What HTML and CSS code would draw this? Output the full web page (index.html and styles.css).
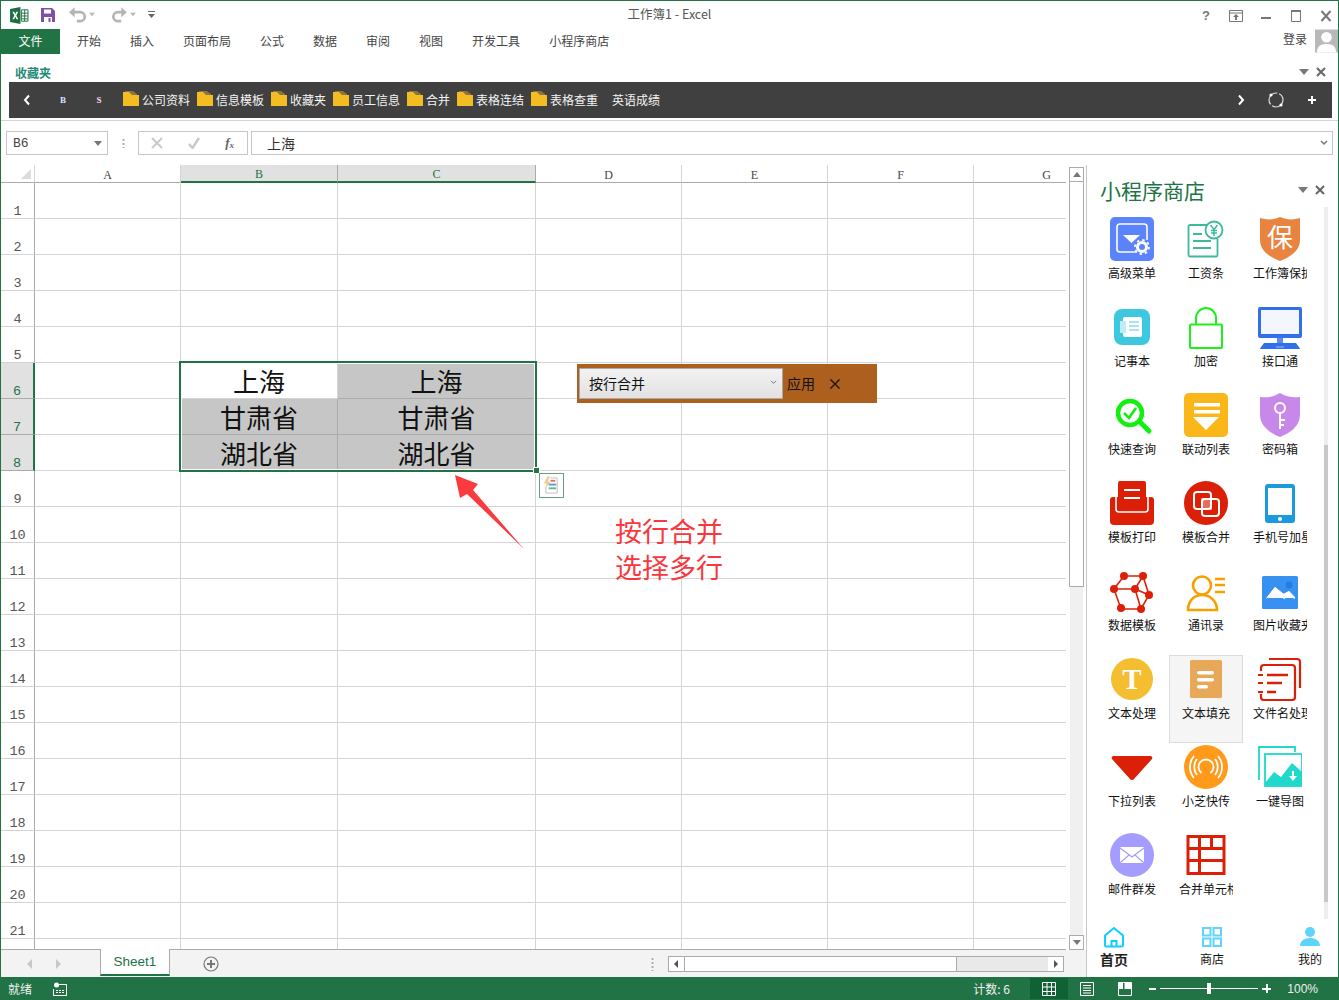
FILE: index.html
```html
<!DOCTYPE html>
<html lang="zh">
<head>
<meta charset="utf-8">
<title>工作簿1 - Excel</title>
<link rel="stylesheet" href="styles.css">
</head>
<body>
<div class="app">
  <header class="titlebar">
    <div class="qat">
      <svg class="q-xl" viewBox="0 0 20 18"><path fill="#1d6f42" d="M0 2l11-2v18L0 16z"/><path fill="#fff" d="M12 3h7v12h-7z" stroke="#1d6f42"/><path stroke="#1d6f42" d="M12 6.500h7M12 9.500h7M12 12.500h7M15.500 3v12" fill="none"/><path d="M2.500 5l2 4-2 4h1.800l1.300-2.600L6.900 13h1.800l-2.100-4 2-4H6.800L5.600 7.500 4.400 5z" fill="#fff"/></svg>
      <svg class="q-save" viewBox="0 0 14 14"><path fill="#7f4fa8" d="M0 0h11l3 3v11H0z"/><path fill="#fff" d="M3 1.500h7v4H3zM3 9h8v5H3z"/><path fill="#7f4fa8" d="M7.500 10h2v4h-2z"/></svg>
      <svg class="q-undo" viewBox="0 0 24 14"><path fill="none" stroke="#b5b5b5" stroke-width="2.400" d="M4 4.500h6a4 4 0 0 1 0 8H7"/><path fill="#b5b5b5" d="M0 4.500L5 0v9z"/><path fill="#b5b5b5" d="M18 5h5l-2.500 3z"/></svg>
      <svg class="q-undo" viewBox="0 0 24 14"><path fill="none" stroke="#b5b5b5" stroke-width="2.400" d="M11 4.500H7a4 4 0 0 0 0 8h3"/><path fill="#b5b5b5" d="M15 4.500L10 0v9z"/><path fill="#b5b5b5" d="M18 5h5l-2.500 3z"/></svg>
      <svg class="q-more" viewBox="0 0 7 8"><path fill="#666" d="M0 0h7v1H0zM0 3h7L3.500 7z"/></svg>
    </div>
    <div class="doc-title">工作簿1 - Excel</div>
    <div class="winbtns">
      <span class="help">?</span>
      <svg class="w-ic" viewBox="0 0 14 12"><path fill="none" stroke="#777" d="M.5 .5h13v11H.5zM.5 3h13"/><path fill="#777" d="M7 4l3 3H8v3H6V7H4z"/></svg>
      <svg class="w-ic" viewBox="0 0 14 12"><path fill="#777" d="M2 7h10v2H2z"/></svg>
      <svg class="w-ic" viewBox="0 0 14 12"><path fill="none" stroke="#777" d="M2.500 .5h9v11h-9z"/><path fill="#777" d="M2 0h10v2H2z"/></svg>
      <svg class="w-ic" viewBox="0 0 14 12"><path stroke="#777" stroke-width="2" d="M2.500 1l9 10M11.500 1l-9 10"/></svg>
    </div>
  </header>

  <nav class="ribbon-tabs">
    <div class="file-tab">文件</div>
    <ul class="tab-list">
      <li>开始</li><li>插入</li><li>页面布局</li><li>公式</li><li>数据</li><li>审阅</li><li>视图</li><li>开发工具</li><li>小程序商店</li>
    </ul>
    <div class="login">登录</div>
    <svg class="avatar" viewBox="0 0 24 24"><path fill="#b9b9b9" d="M0 0h24v24H0z"/><circle cx="12" cy="8" r="5.500" fill="#fff"/><path fill="#fff" d="M2 24c0-7 4-9 10-9s10 2 10 9z"/></svg>
  </nav>

  <section class="favorites">
    <div class="fav-head">
      <span class="fav-title">收藏夹</span>
      <span class="tri"></span>
      <svg class="close-x" viewBox="0 0 10 10"><path stroke="#666" stroke-width="2" d="M1 1l8 8M9 1l-8 8"/></svg>
    </div>
    <div class="fav-bar">
      <svg class="fb-chev" viewBox="0 0 8 12"><path fill="none" stroke="#fff" stroke-width="2" d="M6 1.500L2 6l4 4.500"/></svg>
      <span class="fb-b">B</span>
      <span class="fb-s">S</span>
      <div class="folders">
        <a class="fold"><svg class="folder" viewBox="0 0 16 16"><path fill="#8a7440" d="M2 0h8l4 3v4H2z"/><path fill="#f3bc23" d="M0 1h6l3 3h7v11H0z"/></svg>公司资料</a>
        <a class="fold"><svg class="folder" viewBox="0 0 16 16"><path fill="#8a7440" d="M2 0h8l4 3v4H2z"/><path fill="#f3bc23" d="M0 1h6l3 3h7v11H0z"/></svg>信息模板</a>
        <a class="fold"><svg class="folder" viewBox="0 0 16 16"><path fill="#8a7440" d="M2 0h8l4 3v4H2z"/><path fill="#f3bc23" d="M0 1h6l3 3h7v11H0z"/></svg>收藏夹</a>
        <a class="fold"><svg class="folder" viewBox="0 0 16 16"><path fill="#8a7440" d="M2 0h8l4 3v4H2z"/><path fill="#f3bc23" d="M0 1h6l3 3h7v11H0z"/></svg>员工信息</a>
        <a class="fold"><svg class="folder" viewBox="0 0 16 16"><path fill="#8a7440" d="M2 0h8l4 3v4H2z"/><path fill="#f3bc23" d="M0 1h6l3 3h7v11H0z"/></svg>合并</a>
        <a class="fold"><svg class="folder" viewBox="0 0 16 16"><path fill="#8a7440" d="M2 0h8l4 3v4H2z"/><path fill="#f3bc23" d="M0 1h6l3 3h7v11H0z"/></svg>表格连结</a>
        <a class="fold"><svg class="folder" viewBox="0 0 16 16"><path fill="#8a7440" d="M2 0h8l4 3v4H2z"/><path fill="#f3bc23" d="M0 1h6l3 3h7v11H0z"/></svg>表格查重</a>
        <a class="fold plain">英语成绩</a>
      </div>
      <svg class="fb-next" viewBox="0 0 8 12"><path fill="none" stroke="#fff" stroke-width="2" d="M2 1.500L6 6l-4 4.500"/></svg>
      <svg class="fb-refresh" viewBox="0 0 18 18"><circle cx="9" cy="9" r="7" fill="none" stroke="#ddd" stroke-width="1.200" stroke-dasharray="15 2 17 2"/><circle cx="4" cy="4" r="1.600" fill="#fff"/><circle cx="14" cy="14" r="1.600" fill="#fff"/></svg>
      <svg class="fb-plus" viewBox="0 0 10 10"><path stroke="#fff" stroke-width="2" d="M5 1v8M1 5h8"/></svg>
    </div>
  </section>

  <div class="formula-row">
    <div class="namebox"><span>B6</span><i class="nb-tri"></i></div>
    <div class="fb-dots"></div>
    <div class="fn-box">
      <svg class="fn-ic" viewBox="0 0 12 12"><path stroke="#c9c9c9" stroke-width="2" d="M1 1l10 10M11 1L1 11"/></svg>
      <svg class="fn-ic" viewBox="0 0 12 12"><path fill="none" stroke="#c9c9c9" stroke-width="2.400" d="M1 7l3.500 4L11 1"/></svg>
      <span class="fx">f<sub>x</sub></span>
    </div>
    <div class="formula-input"><span>上海</span><svg class="fi-chev" viewBox="0 0 8 6"><path fill="none" stroke="#777" stroke-width="1.500" d="M1 1l3 3 3-3"/></svg></div>
  </div>

  <div class="main">
    <div class="book">
      <div class="sheet-row">
        <div class="sheet">
          <table class="grid">
            <colgroup><col class="w-h"><col class="w-a"><col class="w-b"><col class="w-c"><col class="w-a"><col class="w-a"><col class="w-a"><col class="w-a"></colgroup>
            <thead><tr><th class="corner"><i></i></th><th>A</th><th class="on">B</th><th class="on">C</th><th>D</th><th>E</th><th>F</th><th>G</th></tr></thead>
            <tbody>
              <tr><th>1</th><td></td><td></td><td></td><td></td><td></td><td></td><td></td></tr>
              <tr><th>2</th><td></td><td></td><td></td><td></td><td></td><td></td><td></td></tr>
              <tr><th>3</th><td></td><td></td><td></td><td></td><td></td><td></td><td></td></tr>
              <tr><th>4</th><td></td><td></td><td></td><td></td><td></td><td></td><td></td></tr>
              <tr><th>5</th><td></td><td></td><td></td><td></td><td></td><td></td><td></td></tr>
              <tr><th class="on">6</th><td></td><td class="big">上海</td><td class="big sel">上海</td><td></td><td></td><td></td><td></td></tr>
              <tr><th class="on">7</th><td></td><td class="big sel">甘肃省</td><td class="big sel">甘肃省</td><td></td><td></td><td></td><td></td></tr>
              <tr><th class="on">8</th><td></td><td class="big sel">湖北省</td><td class="big sel">湖北省</td><td></td><td></td><td></td><td></td></tr>
              <tr><th>9</th><td></td><td></td><td></td><td></td><td></td><td></td><td></td></tr>
              <tr><th>10</th><td></td><td></td><td></td><td></td><td></td><td></td><td></td></tr>
              <tr><th>11</th><td></td><td></td><td></td><td></td><td></td><td></td><td></td></tr>
              <tr><th>12</th><td></td><td></td><td></td><td></td><td></td><td></td><td></td></tr>
              <tr><th>13</th><td></td><td></td><td></td><td></td><td></td><td></td><td></td></tr>
              <tr><th>14</th><td></td><td></td><td></td><td></td><td></td><td></td><td></td></tr>
              <tr><th>15</th><td></td><td></td><td></td><td></td><td></td><td></td><td></td></tr>
              <tr><th>16</th><td></td><td></td><td></td><td></td><td></td><td></td><td></td></tr>
              <tr><th>17</th><td></td><td></td><td></td><td></td><td></td><td></td><td></td></tr>
              <tr><th>18</th><td></td><td></td><td></td><td></td><td></td><td></td><td></td></tr>
              <tr><th>19</th><td></td><td></td><td></td><td></td><td></td><td></td><td></td></tr>
              <tr><th>20</th><td></td><td></td><td></td><td></td><td></td><td></td><td></td></tr>
              <tr><th>21</th><td></td><td></td><td></td><td></td><td></td><td></td><td></td></tr>
              <tr><th></th><td></td><td></td><td></td><td></td><td></td><td></td><td></td></tr>
            </tbody>
          </table>
          <div class="selection"></div>
          <div class="fill-handle"></div>
          <div class="quick">
            <svg viewBox="0 0 18 20"><path fill="#f3c98b" d="M5 0L1 8h3L2 14l6-8H5l2-6z"/><path fill="none" stroke="#999" stroke-width=".6" d="M7 2h8v16H3v-6"/><path fill="#e0704f" d="M8 4h5v2H8z"/><path fill="#5b9bd5" d="M6 8h8v2H6z"/><path fill="#6fb39a" d="M6 12h8v2H6z"/></svg>
          </div>
          <div class="widget">
            <div class="w-select"><span>按行合并</span><svg viewBox="0 0 8 6"><path fill="none" stroke="#777" stroke-width="1.200" d="M1 1l3 3 3-3"/></svg></div>
            <span class="w-apply">应用</span>
            <svg class="w-close" viewBox="0 0 12 12"><path stroke="#111" stroke-width="1.300" d="M1.500 1.500l9 9M10.500 1.500l-9 9"/></svg>
          </div>
          <svg class="arrow" viewBox="0 0 72 78"><path fill="#fb3a3d" d="M1 2l23 9-5 6 51 59-57-55-7 4z"/></svg>
          <div class="note">按行合并<br>选择多行</div>
        </div>
        <div class="vscroll">
          <div class="sb-btn"><i class="up"></i></div>
          <div class="sb-thumb"></div>
          <div class="sb-track"></div>
          <div class="sb-btn"><i class="down"></i></div>
        </div>
      </div>
      <div class="tabs-row">
        <svg class="t-arr" viewBox="0 0 6 10"><path fill="#c8c8c8" d="M5 0v10L0 5z"/></svg>
        <svg class="t-arr" viewBox="0 0 6 10"><path fill="#c8c8c8" d="M1 0v10l5-5z"/></svg>
        <div class="sheet-tab">Sheet1</div>
        <svg class="t-add" viewBox="0 0 16 16"><circle cx="8" cy="8" r="7" fill="none" stroke="#777" stroke-width="1.200"/><path stroke="#777" stroke-width="2" d="M8 4v8M4 8h8"/></svg>
        <div class="t-dots"></div>
        <div class="hscroll">
          <div class="hb"><svg viewBox="0 0 5 8"><path fill="#555" d="M4 0v8L0 4z"/></svg></div>
          <div class="h-thumb"></div>
          <div class="h-track"></div>
          <div class="hb"><svg viewBox="0 0 5 8"><path fill="#555" d="M1 0v8l4-4z"/></svg></div>
        </div>
      </div>
    </div>

    <aside class="pane">
      <div class="pane-head">
        <span class="pane-title">小程序商店</span>
        <span class="tri"></span>
        <svg class="close-x" viewBox="0 0 10 10"><path stroke="#666" stroke-width="2" d="M1 1l8 8M9 1l-8 8"/></svg>
      </div>
      <div class="pane-body">
        <div class="apps">
          <div class="app-item"><svg class="ic" viewBox="0 0 44 44"><rect width="44" height="44" rx="5" fill="#5b83fb"/><path fill="none" stroke="#fff" stroke-width="1.600" d="M27 35H10a3 3 0 0 1-3-3V10a3 3 0 0 1 3-3h24a3 3 0 0 1 3 3v13"/><path fill="#fff" d="M13 18h17l-8.500 8z"/><circle cx="32" cy="30" r="4.500" fill="none" stroke="#fff" stroke-width="3"/><circle cx="32" cy="30" r="7" fill="none" stroke="#fff" stroke-width="1.800" stroke-dasharray="2.500 3"/></svg><span class="lbl">高级菜单</span></div>
          <div class="app-item"><svg class="ic" viewBox="0 0 44 44"><path fill="none" stroke="#3fb8a0" stroke-width="1.800" d="M24 8H6a1.500 1.500 0 0 0-1.500 1.500V38A1.500 1.500 0 0 0 6 39.500h26a1.500 1.500 0 0 0 1.500-1.500V22"/><path stroke="#3fb8a0" stroke-width="1.800" d="M9 17h9M9 24h18M9 31h18"/><circle cx="30" cy="13" r="8.500" fill="#fff" stroke="#3fb8a0" stroke-width="1.800"/><path fill="none" stroke="#3fb8a0" stroke-width="1.500" d="M26.500 8L30 12.500 33.500 8M30 12.500V19M27 13.500h6M27 16h6"/></svg><span class="lbl">工资条</span></div>
          <div class="app-item"><svg class="ic" viewBox="0 0 44 44"><path fill="#e8843f" d="M22 0c7 3 13 3 20 1v22c0 11-10 17-20 21C12 40 2 34 2 23V1c7 2 13 2 20-1z"/><text x="22" y="30" class="ic-txt" fill="#fff" font-size="26" text-anchor="middle">保</text></svg><span class="lbl">工作簿保护</span></div>

          <div class="app-item"><svg class="ic" viewBox="0 0 44 44"><rect x="4" y="4" width="36" height="36" rx="8" fill="#3ec8e0"/><rect x="13" y="12" width="19" height="20" rx="2" fill="#fff"/><rect x="10" y="16" width="6" height="12" fill="#bdeef6"/><path stroke="#8fdcec" stroke-width="1.400" d="M19 17h10M19 21h10M19 25h10"/></svg><span class="lbl">记事本</span></div>
          <div class="app-item"><svg class="ic" viewBox="0 0 44 44"><path fill="none" stroke="#1bf01b" stroke-width="2" d="M7 19.500h30a1 1 0 0 1 1 1V42a1 1 0 0 1-1 1H7a1 1 0 0 1-1-1V20.500a1 1 0 0 1 1-1zM12 19v-6a10 10 0 0 1 20 0v6"/></svg><span class="lbl">加密</span></div>
          <div class="app-item"><svg class="ic" viewBox="0 0 44 44"><rect x="0" y="2" width="44" height="31" rx="2" fill="#3070ea"/><rect x="3" y="5" width="38" height="24" fill="#f3f6fd"/><path fill="#5d8fef" d="M19 33h6v5h-6z"/><path fill="#3070ea" d="M6 38h32l5 7H1z"/><path fill="#9dbcf6" d="M18 41.500h8v1h-8z"/></svg><span class="lbl">接口通</span></div>

          <div class="app-item"><svg class="ic" viewBox="0 0 44 44"><circle cx="20" cy="20" r="12" fill="none" stroke="#12f012" stroke-width="4.500"/><path stroke="#12f012" stroke-width="5" stroke-linecap="round" d="M30 29l9 9"/><path fill="none" stroke="#12f012" stroke-width="2.600" d="M14 20l5 5 7-10"/></svg><span class="lbl">快速查询</span></div>
          <div class="app-item"><svg class="ic" viewBox="0 0 44 44"><rect width="44" height="44" rx="5" fill="#fbb61a"/><path fill="#fff" d="M10 10h26v3.500H10zM10 17h26v3.500H10zM9 24h26L22 37z"/></svg><span class="lbl">联动列表</span></div>
          <div class="app-item"><svg class="ic" viewBox="0 0 44 44"><path fill="#c888ea" d="M22 0c7 4 13 5 20 4v18c0 11-10 18-20 22C12 40 2 33 2 22V4c7 1 13 0 20-4z"/><circle cx="22" cy="15" r="5" fill="none" stroke="#fff" stroke-width="2"/><path stroke="#fff" stroke-width="2" d="M22 20v16M22 27h5M22 32h4"/></svg><span class="lbl">密码箱</span></div>

          <div class="app-item"><svg class="ic" viewBox="0 0 44 44"><path fill="#dc2008" d="M3 16h38a3 3 0 0 1 3 3v21a4 4 0 0 1-4 4H4a4 4 0 0 1-4-4V19a3 3 0 0 1 3-3z"/><path fill="none" stroke="#fff" stroke-width="1.600" d="M6 16v12a3 3 0 0 0 3 3h26a3 3 0 0 0 3-3V16"/><path fill="#dc2008" d="M8 8v21h28V8z"/><rect x="8" width="28" height="27" rx="2" fill="#dc2008"/><path fill="#fff" d="M14 8h16v2H14zM14 16h16v2H14z"/></svg><span class="lbl">模板打印</span></div>
          <div class="app-item"><svg class="ic" viewBox="0 0 44 44"><circle cx="22" cy="22" r="22" fill="#dc2008"/><rect x="10" y="11" width="17" height="17" rx="3" fill="none" stroke="#fff" stroke-width="2"/><rect x="18" y="18" width="17" height="17" rx="3" fill="none" stroke="#fff" stroke-width="2"/><rect x="18" y="18" width="9" height="10" fill="#fff" fill-opacity=".35" stroke="#fff" stroke-width="1.200"/></svg><span class="lbl">模板合并</span></div>
          <div class="app-item"><svg class="ic" viewBox="0 0 44 44"><rect x="7" y="3" width="30" height="39" rx="3" fill="#1a9be0"/><rect x="10" y="7" width="24" height="27" fill="#fff"/><circle cx="22" cy="38" r="2" fill="#fff"/></svg><span class="lbl">手机号加星</span></div>

          <div class="app-item"><svg class="ic" viewBox="0 0 44 44"><g fill="none" stroke="#dc2008" stroke-width="1.600"><path d="M14 7h19l6 19-8 14H11L4 20z"/><path d="M4 20h21l8-13M25 20l14 6M25 20l6 20"/></g><g fill="#dc2008"><circle cx="14" cy="7" r="4"/><circle cx="33" cy="7" r="4"/><circle cx="4" cy="20" r="4"/><circle cx="25" cy="20" r="4"/><circle cx="39" cy="26" r="4"/><circle cx="11" cy="39" r="4"/><circle cx="31" cy="40" r="4"/></g></svg><span class="lbl">数据模板</span></div>
          <div class="app-item"><svg class="ic" viewBox="0 0 44 44"><circle cx="18" cy="16.500" r="9" fill="none" stroke="#f8a000" stroke-width="2.600"/><path fill="none" stroke="#f8a000" stroke-width="2.600" d="M4 41c0-9 6-15 14-15s15 6 15 15z"/><path stroke="#f8a000" stroke-width="2.600" d="M31 10h10M31 16h10M31 23h10"/></svg><span class="lbl">通讯录</span></div>
          <div class="app-item"><svg class="ic" viewBox="0 0 44 44"><rect x="4" y="7" width="36" height="33" rx="1.500" fill="#3890f0"/><path fill="#fff" d="M8 29l9-11 9 7 5-3 6 7v1l-6-3-5 3-9-7z"/><path fill="#fff" d="M8 30l9-12 8 7 6-3 6 6v1H8z" fill-opacity=".95"/><circle cx="31" cy="16" r="3.500" fill="#1f7fe8"/></svg><span class="lbl">图片收藏夹</span></div>

          <div class="app-item"><svg class="ic" viewBox="0 0 44 44"><circle cx="22" cy="22" r="21" fill="#f5bd30"/><text x="22" y="32" class="ic-serif" fill="#fff" font-size="29" font-weight="700" text-anchor="middle">T</text></svg><span class="lbl">文本处理</span></div>
          <div class="app-item hover"><svg class="ic" viewBox="0 0 44 44"><rect x="6" y="3" width="32" height="38" rx="1.500" fill="#e8a85a"/><rect x="13" y="14" width="17" height="3.500" rx="1.700" fill="#fff"/><rect x="13" y="21" width="17" height="3.500" rx="1.700" fill="#fff"/><rect x="13" y="28" width="11" height="3.500" rx="1.700" fill="#fff"/></svg><span class="lbl">文本填充</span></div>
          <div class="app-item"><svg class="ic" viewBox="0 0 44 44"><g fill="none" stroke="#dc2008" stroke-width="2.200"><path d="M11 2h28a3 3 0 0 1 3 3v26"/><path d="M3 14v-3a3 3 0 0 1 3-3h28a3 3 0 0 1 3 3v29a3 3 0 0 1-3 3H6a3 3 0 0 1-3-3v-3"/></g><path fill="#fff" d="M0 16h6v4H0zM0 24h6v4H0zM0 33h6v3H0z"/><path stroke="#dc2008" stroke-width="2" d="M0 18h5M0 26h5M0 35h5"/><path stroke="#dc2008" stroke-width="2.400" d="M9 18h21M9 26h15M9 35h9"/></svg><span class="lbl">文件名处理</span></div>

          <div class="app-item"><svg class="ic" viewBox="0 0 44 44"><path fill="#dc2008" d="M4 11h36a2 2 0 0 1 2 3L24 34a2.500 2.500 0 0 1-4 0L2 14a2 2 0 0 1 2-3z"/></svg><span class="lbl">下拉列表</span></div>
          <div class="app-item"><svg class="ic" viewBox="0 0 44 44"><circle cx="22" cy="22" r="22" fill="#ff9a1a"/><g fill="none" stroke="#fff" stroke-width="1.800"><path d="M17.500 28a7.500 7.500 0 1 1 9 0"/><path d="M13 14a13 13 0 0 0 0 16M31 14a13 13 0 0 1 0 16"/><path d="M10 11a17 17 0 0 0 0 22M34 11a17 17 0 0 1 0 22"/></g></svg><span class="lbl">小芝快传</span></div>
          <div class="app-item"><svg class="ic" viewBox="0 0 44 44"><path fill="none" stroke="#20d8cc" stroke-width="1.800" d="M1 35V2h36v5"/><rect x="7" y="9" width="37" height="32" fill="#fff" stroke="#20d8cc" stroke-width="1.800"/><path fill="#20d8cc" d="M7 38l9-11 7 5 11-14 10 9v14H7z"/><path stroke="#fff" stroke-width="2" d="M35 26v8"/><path fill="#fff" d="M31 31h8l-4 5z"/></svg><span class="lbl">一键导图</span></div>

          <div class="app-item"><svg class="ic" viewBox="0 0 44 44"><circle cx="22" cy="22" r="22" fill="#a49cff"/><rect x="10" y="14" width="24" height="16" rx="1" fill="#fff"/><path fill="none" stroke="#a49cff" stroke-width="1.200" d="M10 15l12 9 12-9M10 30l9-8M34 30l-9-8"/></svg><span class="lbl">邮件群发</span></div>
          <div class="app-item"><svg class="ic" viewBox="0 0 44 44"><path fill="none" stroke="#dc2008" stroke-width="3" d="M4 3.500h36v37H4zM4 15.500h36M4 27.500h36M15.500 3.500v37M27.500 3.500v12"/></svg><span class="lbl">合并单元格</span></div>
        </div>
        <div class="pane-scroll"><div class="pane-thumb"></div></div>
      </div>
      <div class="pane-nav">
        <div class="nav-item active"><svg viewBox="0 0 22 22"><path fill="none" stroke="#0fd0fa" stroke-width="2" d="M2 9.500L11 2l9 7.500V19a1.500 1.500 0 0 1-1.500 1.500h-15A1.500 1.500 0 0 1 2 19zM8.500 20.500V15h5v5.500"/></svg><span>首页</span></div>
        <div class="nav-item"><svg viewBox="0 0 22 22"><path fill="none" stroke="#5cd4fb" stroke-width="2" d="M2 2h7.500v7.500H2zM12.500 2H20v7.500h-7.500zM2 12.500h7.500V20H2zM12.500 12.500H20V20h-7.500z"/></svg><span>商店</span></div>
        <div class="nav-item"><svg viewBox="0 0 22 22"><circle cx="11" cy="6" r="5" fill="#5cd4fb"/><path fill="#5cd4fb" d="M1 20c0-5 4-8 10-8s10 3 10 8z"/></svg><span>我的</span></div>
      </div>
    </aside>
  </div>

  <footer class="status">
    <span class="st-ready">就绪</span>
    <svg class="st-macro" viewBox="0 0 14 14"><circle cx="3.500" cy="3" r="2.500" fill="#fff"/><path fill="none" stroke="#fff" d="M6 2.500h7.500v11H.5V7"/><path stroke="#fff" stroke-dasharray="2 1" d="M3 8.500h9M3 10.500h9"/></svg>
    <span class="st-count">计数: 6</span>
    <div class="st-view on"><svg viewBox="0 0 14 14"><path fill="none" stroke="#fff" d="M.5 .5h13v13H.5zM.5 5h13M.5 9.500h13M5 .5v13M9.500 .5v13"/></svg></div>
    <div class="st-view"><svg viewBox="0 0 14 14"><path fill="none" stroke="#fff" d="M.5 .5h13v13H.5zM3 3.500h8M3 6h8M3 8.500h8M3 11h8"/></svg></div>
    <div class="st-view"><svg viewBox="0 0 14 14"><path fill="none" stroke="#fff" d="M.5 .5h13v13H.5z"/><path fill="#fff" d="M1 1h4v6H1zM6.500 1H13v6H6.500z"/></svg></div>
    <div class="zoom">
      <i class="z-minus"></i>
      <div class="z-line"><i class="z-thumb"></i></div>
      <i class="z-plus"></i>
    </div>
    <span class="st-pct">100%</span>
  </footer>
</div>
</body>
</html>
```
FILE: styles.css
```css
* { box-sizing: border-box; }
html, body { margin: 0; padding: 0; }
body { font-family: "Noto Sans CJK SC", "Liberation Sans", sans-serif; font-size: 12px; color: #444; background: #fff; }
svg { display: block; flex: none; }

.app { width: 1339px; height: 1000px; display: flex; flex-direction: column; border: 1px solid #217346; border-width: 1px 1px 0; overflow: hidden; background: #fff; }

/* title bar */
.titlebar { height: 27px; flex: none; display: grid; grid-template-columns: 1fr auto 1fr; align-items: center; }
.qat { display: flex; align-items: center; padding-left: 9px; padding-top: 1px; }
.q-xl { width: 19px; height: 17px; }
.q-save { width: 14px; height: 14px; margin-left: 12px; }
.q-undo { width: 27px; height: 16px; margin-left: 14px; }
.q-undo + .q-undo { margin-left: 14px; }
.q-more { width: 7px; height: 8px; margin-left: 11px; }
.doc-title { font-size: 12.500px; color: #555; line-height: 16px; margin-top: -2px; }
.winbtns { display: flex; justify-content: flex-end; align-items: center; gap: 16px; padding-right: 5px; padding-top: 2px; }
.help { width: 14px; font: 700 13px "Liberation Sans", sans-serif; color: #777; text-align: center; line-height: 12px; }
.w-ic { width: 14px; height: 12px; }

/* tabs */
.ribbon-tabs { height: 26px; flex: none; display: flex; align-items: center; }
.file-tab { width: 59px; height: 25px; background: #217346; color: #fff; text-align: center; line-height: 23px; }
.tab-list { list-style: none; margin: -2px 0 0; padding: 0 0 0 17px; display: flex; gap: 29px; flex: 1; font-size: 12px; color: #444; }
.login { color: #444; margin-right: 8px; margin-top: -5px; }
.avatar { width: 23px; height: 24px; margin-bottom: 0; }

/* favourites */
.favorites { height: 67px; flex: none; border-bottom: 1px solid #d4d4d4; padding: 0 6px 0 8px; }
.fav-head { height: 28px; display: flex; align-items: center; padding: 8px 0 0 6px; }
.fav-title { font-size: 12px; font-weight: 700; color: #1f8a78; flex: 1; }
.tri { width: 0; height: 0; border: 5px solid transparent; border-top: 6px solid #777; border-bottom: 0; }
.close-x { width: 10px; height: 10px; margin-left: 7px; margin-right: 6px; }
.fav-bar { height: 36px; background: #404040; display: flex; align-items: center; color: #fff; }
.fb-chev { width: 8px; height: 12px; margin-left: 14px; }
.fb-b, .fb-s { font: 700 9px "Liberation Serif", serif; width: 8px; text-align: center; }
.fb-b { margin-left: 28px; color: #dfe2ff; }
.fb-s { margin-left: 28px; color: #fde; }
.folders { display: flex; gap: 7px; margin-left: 20px; margin-top: -2px; flex: 1; }
.fold { display: flex; align-items: center; gap: 3px; font-size: 12px; color: #f4f4f4; white-space: nowrap; }
.fold.plain { margin-left: 7px; }
.folder { width: 16px; height: 16px; }
.fb-next { width: 8px; height: 12px; }
.fb-refresh { width: 18px; height: 18px; margin-left: 22px; }
.fb-plus { width: 10px; height: 10px; margin-left: 22px; margin-right: 15px; }

/* formula row */
.formula-row { height: 44px; flex: none; display: flex; padding: 10px 5px 10px 5px; }
.namebox { width: 102px; border: 1px solid #c6c6c6; display: flex; align-items: center; justify-content: space-between; padding: 0 5px 0 6px; font: 13px "Liberation Mono", monospace; color: #444; }
.nb-tri { border: 4px solid transparent; border-top: 5px solid #777; border-bottom: 0; }
.fb-dots { width: 30px; margin: 7px 0; background: radial-gradient(circle, #aaa 1px, transparent 1.200px) center top / 3px 4px repeat-y; }
.fn-box { width: 110px; border: 1px solid #c6c6c6; display: flex; align-items: center; justify-content: space-between; padding: 0 13px 0 12px; }
.fn-ic { width: 12px; height: 12px; }
.fx { font: italic 700 13px "Liberation Serif", serif; color: #666; }
.fx sub { font-size: 9px; vertical-align: -1px; }
.formula-input { flex: 1; margin-left: 3px; border: 1px solid #c6c6c6; display: flex; align-items: center; padding: 0 2px 0 15px; font-size: 14px; color: #333; }
.formula-input span { flex: 1; }
.fi-chev { width: 8px; height: 6px; margin-right: 2px; }

/* main */
.main { height: 812px; flex: none; display: flex; }
.book { width: 1085px; display: flex; flex-direction: column; }
.sheet-row { height: 785px; display: flex; }
.sheet { position: relative; width: 1065px; height: 785px; overflow: hidden; border-bottom: 1px solid #ababab; flex: none; }

.grid { border-collapse: separate; border-spacing: 0; table-layout: fixed; width: 1119px; }
.w-h { width: 34px; } .w-a { width: 146px; } .w-b { width: 157px; } .w-c { width: 198px; }
.grid th { font: 400 12px "Liberation Serif", serif; color: #444; padding: 0; }
.grid thead th { height: 18px; border-bottom: 1px solid #ababab; border-right: 1px solid #d4d4d4; line-height: 14px; padding-top: 3px; }
.grid thead th.on { background: #e1e1e1; color: #217346; border-bottom: 2px solid #217346; border-right-color: #ababab; line-height: 13px; }
.corner { position: relative; }
.corner i { position: absolute; right: 3px; bottom: 3px; border: 5px solid transparent; border-right-color: #dcdcdc; border-bottom-color: #dcdcdc; }
.grid tbody th { height: 36px; border-right: 1px solid #ababab; border-bottom: 1px solid #d4d4d4; vertical-align: bottom; font: 400 13.500px/13px "Liberation Mono", monospace; color: #555; }
.grid tbody th.on { background: #e1e1e1; color: #217346; border-right: 2px solid #217346; border-bottom-color: #ababab; }
.grid td { height: 36px; border-right: 1px solid #d4d4d4; border-bottom: 1px solid #d4d4d4; padding: 0; }
.grid td.big { font-size: 26px; line-height: 34px; color: #111; text-align: center; vertical-align: bottom; overflow: hidden; }
.grid td.sel { background: #c6c6c6; border-color: #ababab; }

.selection { position: absolute; left: 178px; top: 196px; width: 358px; height: 111px; border: 2px solid #217346; box-shadow: inset 0 0 0 1px #fff; pointer-events: none; }
.fill-handle { position: absolute; left: 532px; top: 302px; width: 7px; height: 7px; background: #217346; border: 1px solid #fff; }
.quick { position: absolute; left: 538px; top: 308px; width: 25px; height: 25px; border: 1px solid #6b9e81; background: #fff; padding: 2px 3px; }
.quick svg { width: 17px; height: 19px; }
.widget { position: absolute; left: 576px; top: 199px; width: 300px; height: 39px; background: #ad5f1e; display: flex; align-items: center; padding: 0 2px; color: #111; }
.w-select { width: 204px; height: 31px; border: 1px solid #a8a8a8; background: linear-gradient(#f2f2f2, #e2e2e2); display: flex; align-items: center; justify-content: space-between; padding: 0 5px 2px 9px; font-size: 14px; color: #111; }
.w-select svg { width: 7px; height: 5px; }
.w-apply { font-size: 14px; margin-left: 4px; margin-top: -2px; }
.w-close { width: 12px; height: 12px; margin-left: 14px; }
.arrow { position: absolute; left: 453px; top: 308px; width: 72px; height: 78px; }
.note { position: absolute; left: 614px; top: 348px; font-size: 27px; line-height: 36px; color: #f8383e; }

/* vertical scroll */
.vscroll { width: 20px; display: flex; flex-direction: column; padding: 2px 2px 0 3px; background: #fff; }
.sb-btn { height: 15px; border: 1px solid #ababab; display: flex; align-items: center; justify-content: center; background: #fff; flex: none; }
.sb-btn i { width: 0; height: 0; border: 4px solid transparent; }
.sb-btn i.up { border-bottom: 5px solid #777; border-top: 0; }
.sb-btn i.down { border-top: 5px solid #777; border-bottom: 0; }
.sb-thumb { height: 405px; border: 1px solid #ababab; border-top: 0; flex: none; background: #fff; }
.sb-track { flex: 1; background: #f0f0f0; margin: 0 1px; }

/* sheet tabs */
.tabs-row { height: 27px; background: #f3f3f3; display: flex; align-items: center; position: relative; }
.t-arr { width: 6px; height: 10px; margin-left: 22px; }
.t-arr:first-child { margin-left: 26px; }
.sheet-tab { width: 70px; height: 27px; margin-left: 39px; background: #fff; border: 1px solid #ababab; border-top: 0; border-bottom: 2px solid #217346; color: #217346; font: 13.500px/26px "Liberation Sans", sans-serif; text-align: center; align-self: flex-start; margin-top: -1px; }
.t-add { width: 16px; height: 16px; margin-left: 33px; }
.t-dots { width: 3px; height: 14px; margin-left: 432px; background: radial-gradient(circle, #aaa 1px, transparent 1.200px) center top / 3px 4px repeat-y; }
.hscroll { width: 396px; height: 16px; margin-left: 14px; display: flex; border: 1px solid #ababab; background: #e9e9e9; }
.hb { width: 15px; background: #fff; display: flex; align-items: center; justify-content: center; flex: none; }
.hb svg { width: 5px; height: 8px; }
.h-thumb { width: 273px; background: #fff; border: 1px solid #ababab; border-width: 0 1px; flex: none; }
.h-track { flex: 1; }

/* right pane */
.pane { width: 252px; border-left: 1px solid #c6c6c6; display: flex; flex-direction: column; }
.pane-head { height: 42px; flex: none; display: flex; align-items: center; padding: 7px 0 0 13px; }
.pane-title { font-size: 21px; color: #217346; flex: 1; line-height: 30px; }
.pane-head .close-x { margin-right: 13px; margin-left: 7px; }
.pane-body { height: 712px; flex: none; display: flex; }
.apps { width: 237px; padding: 8px 0 0 8px; display: grid; grid-template-columns: repeat(3, 74px); grid-auto-rows: 88px; align-content: start; }
.app-item { display: flex; flex-direction: column; align-items: center; padding-top: 2px; }
.app-item.hover { background: #f5f5f5; outline: 1px solid #dcdcdc; outline-offset: -1px; }
.ic { width: 44px; height: 44px; }
.ic-txt { font-family: "Noto Sans CJK SC", sans-serif; }
.ic-serif { font-family: "Liberation Serif", serif; }
.lbl { width: 54px; margin-top: 4px; line-height: 16px; font-size: 12px; color: #111; text-align: center; white-space: nowrap; overflow: hidden; }
.pane-scroll { width: 4px; background: #eee; height: 712px; }
.pane-thumb { margin-top: 238px; height: 457px; background: #c8c8c8; }
.pane-nav { height: 58px; flex: none; display: flex; justify-content: space-between; padding: 7px 6px 0 7px; margin-right: 2px; }
.nav-item { width: 40px; display: flex; flex-direction: column; align-items: center; font-size: 12px; color: #111; }
.nav-item svg { width: 22px; height: 22px; }
.nav-item span { line-height: 16px; margin-top: 3px; }
.nav-item.active span { font-size: 14px; font-weight: 700; color: #222; line-height: 18px; margin-top: 2px; }

/* status */
.status { height: 23px; flex: none; margin: 0 -1px; background: #217346; color: #f1f1f1; display: flex; align-items: center; font-size: 12px; padding: 0 21px 0 8px; }
.st-ready { width: 45px; }
.st-macro { width: 14px; height: 14px; }
.st-count { margin-left: auto; width: 57px; }
.st-view { width: 38px; height: 21px; display: flex; align-items: center; justify-content: center; }
.st-view.on { background: #0e6233; }
.st-view svg { width: 14px; height: 14px; }
.zoom { width: 122px; display: flex; align-items: center; margin-left: 5px; }
.z-minus { width: 7px; height: 2px; background: #fff; }
.z-line { width: 100px; height: 1px; background: #fff; margin: 0 4px; position: relative; }
.z-thumb { position: absolute; left: 47px; top: -5px; width: 4px; height: 11px; background: #fff; }
.z-plus { width: 9px; height: 9px; background: linear-gradient(#fff, #fff) center / 100% 2px no-repeat, linear-gradient(#fff, #fff) center / 2px 100% no-repeat; }
.st-pct { font: 12px "Liberation Sans", sans-serif; color: #eee; margin-left: 16px; }
```
